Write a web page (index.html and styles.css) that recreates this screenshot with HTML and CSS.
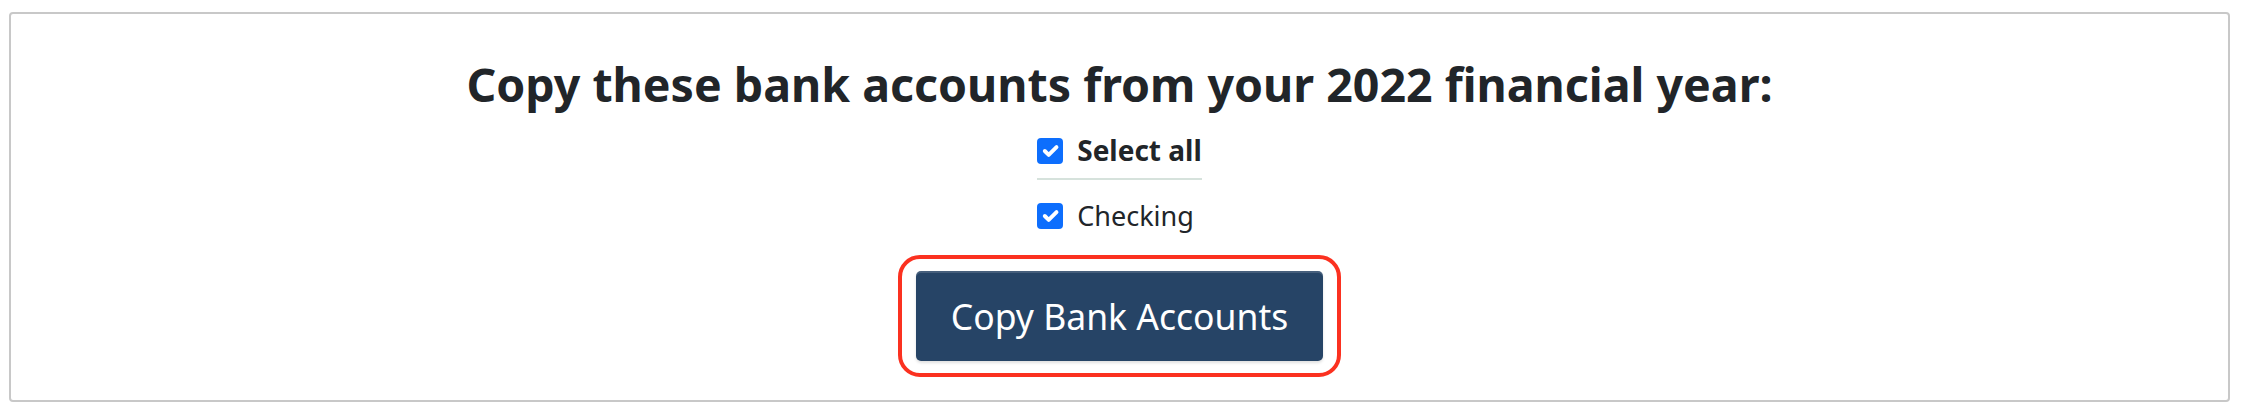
FILE: index.html
```html
<!DOCTYPE html>
<html lang="en">
<head>
  <meta charset="UTF-8" />
  <meta name="viewport" content="width=device-width, initial-scale=1" />
  <title>Copy Bank Accounts</title>
  <link rel="stylesheet" href="styles.css">
</head>
<body>
  <div class="panel">
    <h2 class="title">Copy these bank accounts from your 2022 financial year:</h2>

    <div class="check-list">
      <label class="check-row select-all">
        <span class="check-box">
          <svg viewBox="0 0 20 20" width="26" height="26"><path d="m6 10 3 3 6-6" fill="none" stroke="#fff" stroke-width="3" stroke-linecap="round" stroke-linejoin="round"/></svg>
        </span>
        <span class="check-label">Select all</span>
      </label>
      <label class="check-row">
        <span class="check-box">
          <svg viewBox="0 0 20 20" width="26" height="26"><path d="m6 10 3 3 6-6" fill="none" stroke="#fff" stroke-width="3" stroke-linecap="round" stroke-linejoin="round"/></svg>
        </span>
        <span class="check-label">Checking</span>
      </label>
    </div>

    <div class="highlight">
      <button class="copy-btn">Copy Bank Accounts</button>
    </div>
  </div>
</body>
</html>
```

FILE: styles.css
```css
body {
  margin: 0;
  background: #fff;
  font-family: 'Noto Sans', 'Open Sans', sans-serif;
  color: #212529;
}

.panel {
  display: flex;
  flex-direction: column;
  align-items: center;
  margin: 12px 12px 13px 9px;
  padding: 40px 0 23px 0;
  border: 2px solid #c8c8c8;
  border-radius: 4px;
}

.title {
  margin: 0;
  font-size: 46.5px;
  font-weight: 700;
  line-height: 60px;
}

.check-list {
  display: flex;
  flex-direction: column;
  margin-top: 17px;
}

.check-row {
  display: flex;
  align-items: center;
  gap: 14px;
  font-size: 27px;
  line-height: 39px;
}

.check-row.select-all {
  font-size: 28px;
  font-weight: 700;
  padding-bottom: 8px;
  border-bottom: 2px solid #d6e2dc;
  margin-bottom: 16px;
}

.check-box {
  display: flex;
  width: 26px;
  height: 26px;
  background: #0d6efd;
  border-radius: 4px;
}

.highlight {
  margin-top: 20px;
  padding: 12px 14px;
  border: 4px solid #fb3120;
  border-radius: 22px;
}

.copy-btn {
  display: block;
  padding: 19px 35px;
  font-family: 'Noto Sans', 'Open Sans', sans-serif;
  font-size: 35.5px;
  line-height: 52px;
  color: #fff;
  background: #264466;
  border: none;
  border-radius: 5px;
  box-shadow: inset 0 2px 0 rgba(255, 255, 255, 0.15), 0 2px 3px rgba(0, 0, 0, 0.12);
  cursor: pointer;
}
```
